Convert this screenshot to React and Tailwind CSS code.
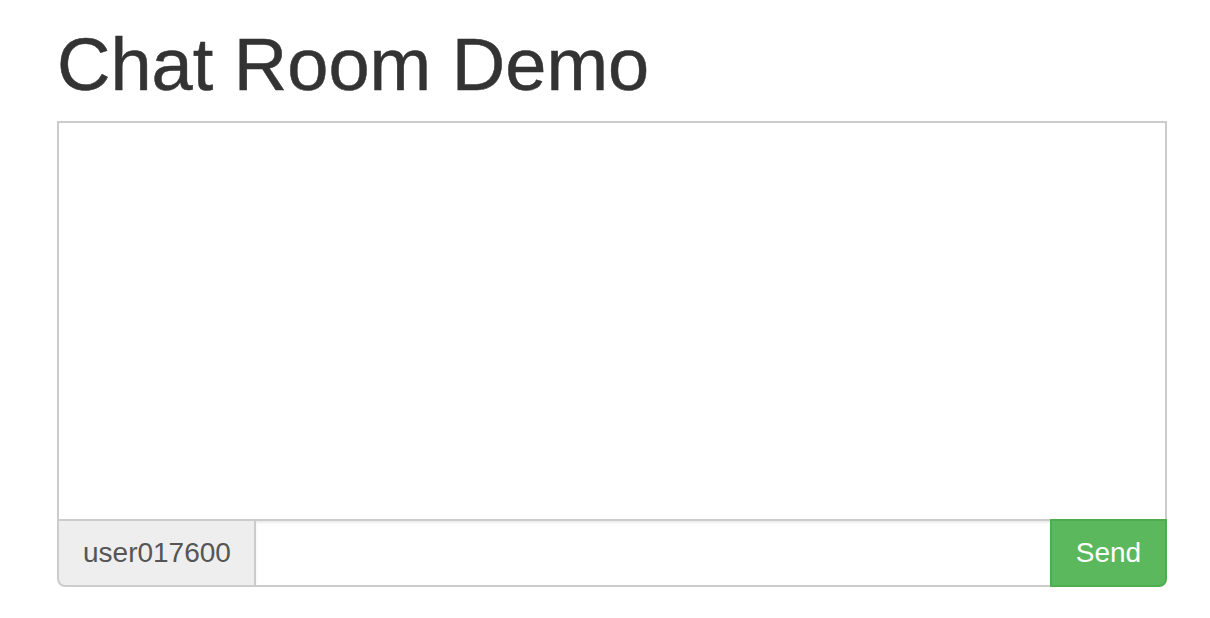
import React from 'react';

export default function App() {
  return (
    <div className="min-h-screen bg-white font-['Liberation_Sans',Arial,sans-serif] text-[#333]">
      <div className="ml-[57px] w-[1110px] pt-[25px]">
        {/* HEADER */}
        <h1 className="text-[74px] leading-[79px] font-normal mb-[17px] [-webkit-text-stroke:0.5px_#333]">Chat Room Demo</h1>

        {/* MESSAGES */}
        <div className="h-[398px] border-2 border-b-0 border-[#ccc] bg-white overflow-y-auto"></div>

        {/* INPUT ROW */}
        <div className="flex h-[68px]">
          <span className="flex items-center w-[199px] px-[24px] bg-[#eee] border-2 border-[#ccc] rounded-bl-[8px] text-[28px] text-[#555]">
            user017600
          </span>
          <input
            type="text"
            className="flex-1 min-w-0 border-2 border-l-0 border-r-0 border-[#ccc] bg-white px-[24px] text-[28px] text-[#555] outline-none shadow-[inset_0_2px_2px_rgba(0,0,0,0.075)]"
          />
          <button className="w-[117px] bg-[#5cb85c] border-2 border-[#4cae4c] rounded-br-[8px] text-white text-[28px] text-center">
            Send
          </button>
        </div>
      </div>
    </div>
  );
}
